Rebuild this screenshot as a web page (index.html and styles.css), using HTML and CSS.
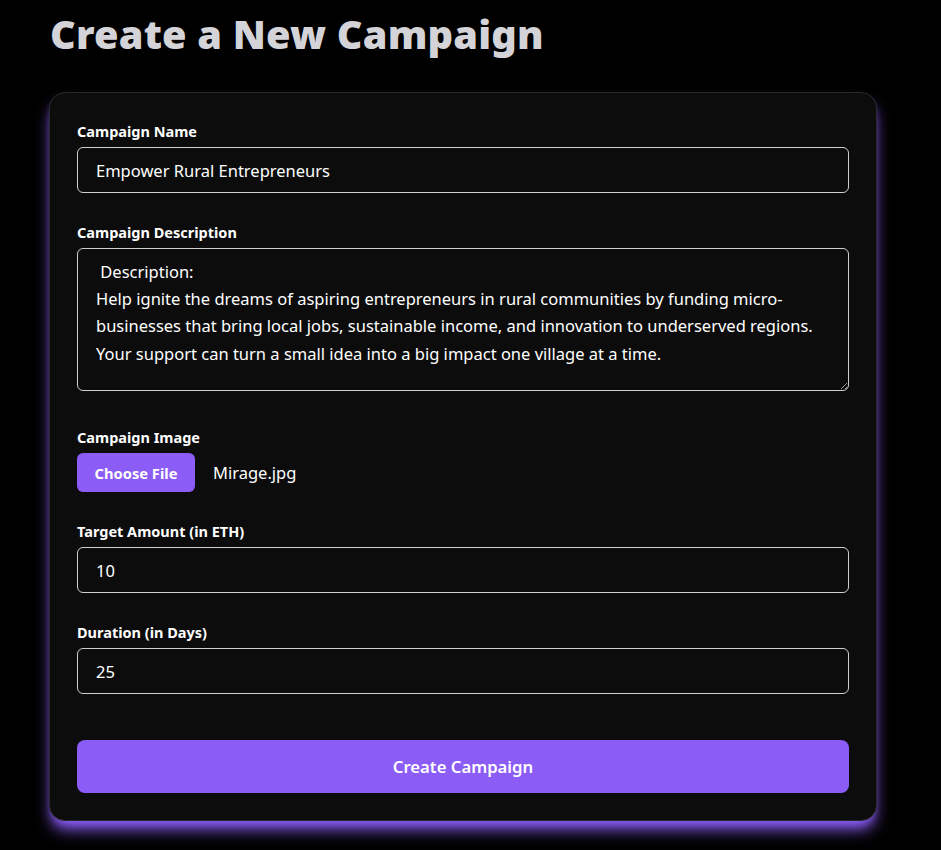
FILE: index.html
```html
<!DOCTYPE html>
<html lang="en">
<head>
<meta charset="utf-8">
<title>Create a New Campaign</title>
<link rel="stylesheet" href="styles.css">
</head>
<body>
<main class="page">
  <h1 class="title">Create a New Campaign</h1>
  <form class="card">
    <div class="field">
      <label class="label" for="name">Campaign Name</label>
      <input class="input" id="name" type="text" value="Empower Rural Entrepreneurs">
    </div>
    <div class="field field-desc">
      <label class="label" for="desc">Campaign Description</label>
      <textarea class="input textarea" id="desc" wrap="off"> Description:
Help ignite the dreams of aspiring entrepreneurs in rural communities by funding micro-
businesses that bring local jobs, sustainable income, and innovation to underserved regions.
Your support can turn a small idea into a big impact one village at a time.</textarea>
    </div>
    <div class="field">
      <span class="label">Campaign Image</span>
      <label class="file">
        <input class="file-input" type="file" accept="image/*">
        <span class="file-btn">Choose File</span>
        <span class="file-name">Mirage.jpg</span>
      </label>
    </div>
    <div class="field">
      <label class="label" for="target">Target Amount (in ETH)</label>
      <input class="input" id="target" type="text" value="10">
    </div>
    <div class="field">
      <label class="label" for="duration">Duration (in Days)</label>
      <input class="input" id="duration" type="text" value="25">
    </div>
    <button class="submit" type="submit">Create Campaign</button>
  </form>
</main>
</body>
</html>
```
FILE: styles.css
```css
* {
  box-sizing: border-box;
}

html, body {
  margin: 0;
  background: #000;
}

body {
  font-family: "Noto Sans", "Open Sans", sans-serif;
  color: #fff;
}

.page {
  width: 828px;
  margin-left: 49px;
  padding-bottom: 40px;
}

.title {
  margin: 9px 0 33px 1px;
  font-size: 39.7px;
  line-height: 50px;
  font-weight: 900;
  color: #d4d4d8;
  letter-spacing: 0.2px;
}

.card {
  display: flex;
  flex-direction: column;
  gap: 29px;
  padding: 28px 27px 27px;
  background: #0c0c0c;
  border: 1px solid #2a2a2a;
  border-radius: 16px;
  box-shadow: 0 11px 16px -3px #8b5cf6,
              0 5px 8px -4px rgba(139, 92, 246, 0.85);
}

.field {
  display: flex;
  flex-direction: column;
  gap: 6px;
}

.field-desc {
  margin-bottom: 7px;
}

.label {
  font-size: 14.5px;
  line-height: 20px;
  font-weight: 700;
  color: #fff;
}

.input {
  height: 46px;
  width: 100%;
  padding: 0 18px;
  background: transparent;
  border: 1px solid #cfcfcf;
  border-radius: 6px;
  color: #fff;
  font-family: inherit;
  font-size: 16.5px;
  outline: none;
}

.textarea {
  height: 143px;
  padding: 9px 8px 9px 18px;
  line-height: 27.2px;
  resize: vertical;
  overflow: hidden;
  white-space: pre;
}

.file {
  display: flex;
  align-items: center;
  gap: 18px;
  cursor: pointer;
}

.file-input {
  display: none;
}

.file-btn {
  display: flex;
  align-items: center;
  justify-content: center;
  width: 118px;
  height: 39px;
  background: #8b5cf6;
  border-radius: 6px;
  font-size: 14.7px;
  font-weight: 700;
  color: #fff;
}

.file-name {
  font-size: 16.5px;
  color: #fff;
}

.submit {
  margin-top: 17px;
  height: 53px;
  border: none;
  border-radius: 8px;
  background: #8b5cf6;
  color: #fff;
  font-family: inherit;
  font-size: 16.7px;
  font-weight: 600;
  cursor: pointer;
}
```
